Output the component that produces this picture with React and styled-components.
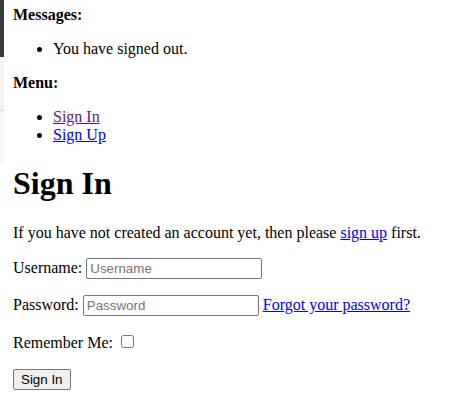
import React from 'react';
import styled, { createGlobalStyle } from 'styled-components';

const Global = createGlobalStyle`
  html, body {
    margin: 0;
    padding: 0;
    background: #fff;
  }
  body {
    font-family: "Liberation Serif", "Times New Roman", serif;
    font-size: 16px;
    color: #000;
  }
`

const Page = styled.div`
  display: flex;
  align-items: flex-start;
  min-height: 406px;
`
const Edge = styled.div`
  width: 4px;
  flex: none;
  display: flex;
  flex-direction: column;
`
const EdgePart = styled.div`
  height: ${p => p.h}px;
  background: ${p => p.color};
  border-bottom: ${p => p.line ? '1px solid #dcdcdc' : 'none'};
`
const Content = styled.div`
  flex: 1;
  padding: 6px 8px 8px 9px;
`
const Block = styled.div``
const List = styled.ul`
  margin: 16px 0;
  padding-left: 40px;
`
const Link = styled.a`
  color: ${p => p.visited ? '#551a8b' : '#0000ee'};
  text-decoration: underline;
  cursor: pointer;
`
const Title = styled.h1`
  font-size: 32px;
  font-weight: bold;
  margin: 21.44px 0;
`
const Para = styled.p`
  margin: 16px 0;
`
const Field = styled.input`
  box-sizing: border-box;
  width: ${p => p.w || 176}px;
  height: 21px;
  padding: 1px 3px;
  border: 1px solid #767676;
  border-radius: 2px;
  font-family: "Liberation Sans", Arial, sans-serif;
  font-size: 13.333px;
  vertical-align: baseline;
  &::placeholder {
    color: #757575;
  }
`
const Check = styled.input`
  width: 13px;
  height: 13px;
  margin: 3px 3px 3px 4px;
  vertical-align: baseline;
`
const Button = styled.button`
  font-family: "Liberation Sans", Arial, sans-serif;
  font-size: 13.333px;
  padding: 1px 7px;
  height: 21px;
  margin-top: 1px;
  background: #efefef;
  border: 1px solid #767676;
  border-radius: 2px;
  color: #000;
`

export default function App() {
  return (
    <Page>
      <Global />
      <Edge>
        <EdgePart h={57} color="#3a3a3a" />
        <EdgePart h={53} color="#f3f3f3" line />
        <EdgePart h={52} color="#f7f7f7" />
      </Edge>
      <Content>
        <Block>
          <strong>Messages:</strong>
          <List>
            <li>You have signed out.</li>
          </List>
        </Block>
        <Block>
          <strong>Menu:</strong>
          <List>
            <li><Link visited>Sign In</Link></li>
            <li><Link>Sign Up</Link></li>
          </List>
        </Block>
        <Title>Sign In</Title>
        <Para>
          If you have not created an account yet, then please <Link>sign up</Link> first.
        </Para>
        <form onSubmit={e => e.preventDefault()}>
          <Para>
            <label>Username:</label> <Field type="text" placeholder="Username" />
          </Para>
          <Para>
            <label>Password:</label> <Field type="password" placeholder="Password" />{' '}
            <Link>Forgot your password?</Link>
          </Para>
          <Para>
            <label>Remember Me:</label> <Check type="checkbox" />
          </Para>
          <Button type="submit">Sign In</Button>
        </form>
      </Content>
    </Page>
  );
}
